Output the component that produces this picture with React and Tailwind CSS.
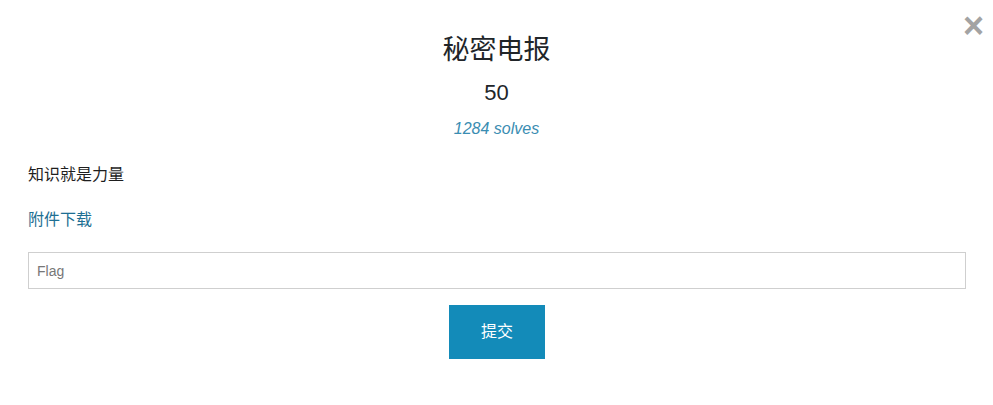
export default function App() {
  const font = { fontFamily: '"Liberation Sans", "Noto Sans CJK SC", Arial, sans-serif' };
  return (
    <div className="relative w-[993px] h-[405px] bg-white text-[#212529]" style={font}>
      <div
        className="absolute right-[9px] top-[4px] text-[36px] leading-[44px] font-bold text-[#a3a3a3]"
        style={font}
      >
        ×
      </div>
      <div className="px-[28px] pt-[32px] flex flex-col">
        <h2 className="text-center text-[27px] leading-[36px] text-[#212529]">秘密电报</h2>
        <div className="text-center text-[22px] leading-[30px] mt-[10px]">50</div>
        <div className="text-center text-[16px] leading-[22px] italic text-[#3a8db2] mt-[10px]">1284 solves</div>
        <p className="text-[16px] leading-[22px] mt-[24px] text-[#1e1e1e]">知识就是力量</p>
        <a className="text-[16px] leading-[22px] mt-[23px] text-[#1e6f93]">附件下载</a>
        <input
          placeholder="Flag"
          className="mt-[21px] h-[37px] w-[938px] border border-[#cfcfcf] px-[8px] text-[14px] placeholder:text-[#777] outline-none"
          style={font}
        />
        <div className="flex justify-center mt-[16px]">
          <button className="w-[96px] h-[54px] bg-[#138bb9] text-white text-[16px] ml-[1px]">提交</button>
        </div>
      </div>
    </div>
  );
}
